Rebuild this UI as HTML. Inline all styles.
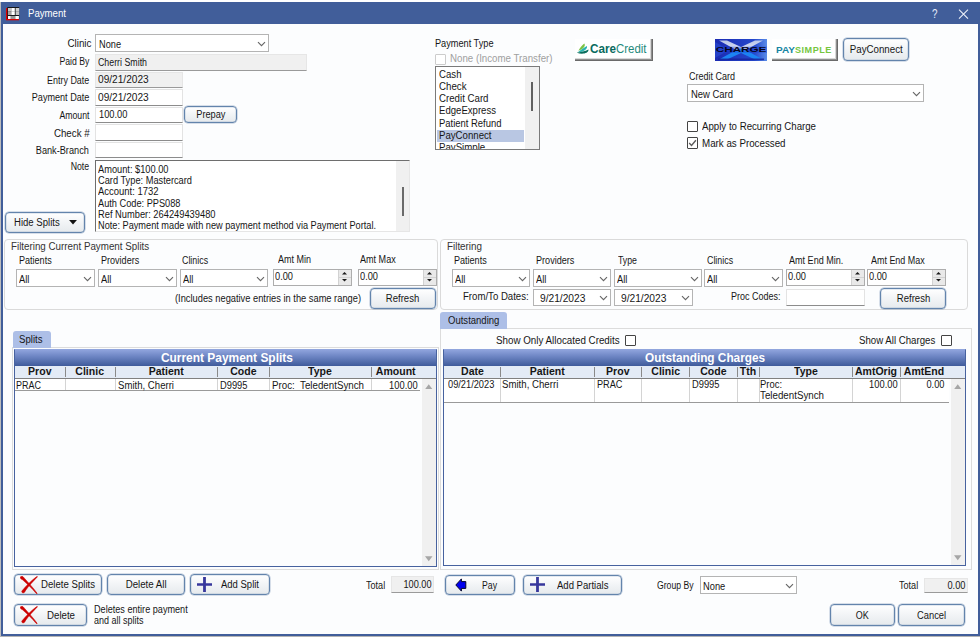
<!DOCTYPE html>
<html lang="en"><head><meta charset="utf-8"><title>Payment</title>
<style>
html,body{margin:0;padding:0;}
body{width:980px;height:637px;position:relative;overflow:hidden;background:#fff;font-family:"Liberation Sans",sans-serif;font-size:11px;}
body div, body span.t, body svg{position:absolute;box-sizing:border-box;}
span.t{white-space:pre;display:block;}
.win{background:#fcfdfe;}
.tb{background:#fff;border:1px solid #e3e3e3;border-bottom-color:#8c8c8c;}
.tbg{background:#f0f0f0;border:1px solid #e6e6e6;border-bottom-color:#9a9a9a;}
.cb{background:#fff;border:1px solid #b4b4b4;}
.btn{border:1px solid #6384ac;border-radius:4px;background:linear-gradient(#ffffff,#f3f5f7 45%,#e6eaed);box-shadow:0 0 0 0.5px rgba(99,132,172,.5),inset 0 0 0 0.5px rgba(99,132,172,.35);}
.chk{background:#fff;border:1px solid #444;border-radius:1px;}
.grp{border:1px solid #dadada;border-radius:4px;}

</style></head>
<body>
<div style="left:0px;top:0px;width:980px;height:637px;background:#fff;"></div>
<div style="left:0px;top:2px;width:1px;height:635px;background:#bdbdbd;"></div>
<div style="left:0px;top:636px;width:980px;height:1px;background:#b4b4b4;"></div>
<div style="left:1px;top:2px;width:979px;height:634px;background:#415e9a;"></div>
<div class="win" style="left:3px;top:24px;width:975px;height:610px;"></div>
<svg style="left:6px;top:7px" width="14" height="14" viewBox="0 0 14 14"><rect x="0" y="1" width="13" height="12.3" fill="#e00000"/><rect x="1.3" y="0" width="11.9" height="12" fill="#16181c"/><rect x="2" y="1" width="3.3" height="3.2" fill="#c6c6c6"/><rect x="5.3" y="1" width="3.5" height="3.2" fill="#fff"/><rect x="9.6" y="1" width="3.6" height="3.2" fill="#cfcfcf"/><rect x="2" y="4.2" width="3.3" height="3.8" fill="#a4a4a4"/><rect x="5.3" y="4.2" width="3.5" height="3.8" fill="#fff"/><rect x="9.6" y="4.2" width="3.6" height="3.8" fill="#c4c4c4"/><rect x="2" y="9" width="2.8" height="3" fill="#fff"/><rect x="4.8" y="9" width="4.5" height="3" fill="#979797"/><rect x="9.3" y="9" width="3.6" height="3" fill="#fff"/></svg>
<span class="t" style="left:28.3px;transform-origin:0 0;top:8.04px;font-size:10px;line-height:12px;transform:scaleX(0.9628);color:#fff;">Payment</span>
<span class="t" style="left:932px;transform-origin:0 0;top:7.34px;font-size:12px;line-height:14px;transform:scaleX(0.8224);color:#e8eefb;">?</span>
<svg style="left:958px;top:9px" width="11" height="11" viewBox="0 0 11 11"><path d="M1 0.7L10 9.7M10 0.7L1 9.7" stroke="#eef2fa" stroke-width="1.05" fill="none"/></svg>
<span class="t" style="left:66.55px;transform-origin:100% 0;top:38.03px;font-size:10px;line-height:12px;transform:scaleX(0.9815);color:#161616;">Clinic</span>
<div class="cb" style="left:95px;top:34px;width:174px;height:18px;"></div>
<svg style="left:256.7px;top:40.6px" width="9" height="6" viewBox="0 0 9 6"><path d="M1 1.2L4.5 4.6L8 1.2" stroke="#666" stroke-width="1.15" fill="none"/></svg>
<span class="t" style="left:99.4px;transform-origin:0 0;top:38.64px;font-size:10px;line-height:12px;transform:scaleX(0.9203);color:#161616;">None</span>
<span class="t" style="left:54.83px;transform-origin:100% 0;top:56.03px;font-size:10px;line-height:12px;transform:scaleX(0.8704);color:#161616;">Paid By</span>
<div class="tbg" style="left:95px;top:54px;width:212px;height:17px;"></div>
<span class="t" style="left:97.8px;transform-origin:0 0;top:56.53px;font-size:10px;line-height:12px;transform:scaleX(0.8816);color:#161616;">Cherri Smith</span>
<span class="t" style="left:42.05px;transform-origin:100% 0;top:74.53px;font-size:10px;line-height:12px;transform:scaleX(0.8931);color:#161616;">Entry Date</span>
<div class="tbg" style="left:95px;top:72px;width:88px;height:16px;"></div>
<span class="t" style="left:98px;transform-origin:0 0;top:73.53px;font-size:10px;line-height:12px;transform:scaleX(1.0127);color:#161616;">09/21/2023</span>
<span class="t" style="left:25.92px;transform-origin:100% 0;top:92.03px;font-size:10px;line-height:12px;transform:scaleX(0.9089);color:#161616;">Payment Date</span>
<div class="tb" style="left:95px;top:89px;width:88px;height:17px;"></div>
<span class="t" style="left:98px;transform-origin:0 0;top:91.53px;font-size:10px;line-height:12px;transform:scaleX(1.0127);color:#161616;">09/21/2023</span>
<span class="t" style="left:54.83px;transform-origin:100% 0;top:109.83px;font-size:10px;line-height:12px;transform:scaleX(0.8704);color:#161616;">Amount</span>
<div class="tb" style="left:95px;top:107px;width:88px;height:16px;"></div>
<span class="t" style="left:98.6px;transform-origin:0 0;top:108.53px;font-size:10px;line-height:12px;transform:scaleX(0.9283);color:#161616;">100.00</span>
<span class="t" style="left:52.81px;transform-origin:100% 0;top:127.53px;font-size:10px;line-height:12px;transform:scaleX(0.9758);color:#161616;">Check #</span>
<div class="tb" style="left:95px;top:124px;width:88px;height:17px;"></div>
<span class="t" style="left:31.49px;transform-origin:100% 0;top:145.03px;font-size:10px;line-height:12px;transform:scaleX(0.9168);color:#161616;">Bank-Branch</span>
<div class="tb" style="left:95px;top:142px;width:88px;height:16px;"></div>
<div class="btn" style="left:184px;top:106px;width:53px;height:17px;"></div>
<span class="t" style="left:194.56px;transform-origin:50% 0;top:109.03px;font-size:10px;line-height:12px;transform:scaleX(0.9215);color:#161616;">Prepay</span>
<span class="t" style="left:68.17px;transform-origin:100% 0;top:161.03px;font-size:10px;line-height:12px;transform:scaleX(0.8757);color:#161616;">Note</span>
<div style="left:95px;top:160px;width:315px;height:71.5px;background:#fff;border:1px solid #6e6e6e;border-right-color:#e6e6e6;border-bottom-color:#e6e6e6;"></div>
<div style="left:396px;top:161px;width:13px;height:70px;background:#f0f0f0;"></div>
<span class="t" style="left:98px;transform-origin:0 0;top:163.53px;font-size:10px;line-height:12px;transform:scaleX(0.9255);color:#161616;">Amount: $100.00</span>
<span class="t" style="left:98px;transform-origin:0 0;top:174.87px;font-size:10px;line-height:12px;transform:scaleX(0.9258);color:#161616;">Card Type: Mastercard</span>
<span class="t" style="left:98px;transform-origin:0 0;top:186.19px;font-size:10px;line-height:12px;transform:scaleX(0.9462);color:#161616;">Account: 1732</span>
<span class="t" style="left:98px;transform-origin:0 0;top:197.53px;font-size:10px;line-height:12px;transform:scaleX(0.9216);color:#161616;">Auth Code: PPS088</span>
<span class="t" style="left:98px;transform-origin:0 0;top:208.85px;font-size:10px;line-height:12px;transform:scaleX(0.9310);color:#161616;">Ref Number: 264249439480</span>
<span class="t" style="left:98px;transform-origin:0 0;top:220.19px;font-size:10px;line-height:12px;transform:scaleX(0.9194);color:#161616;">Note: Payment made with new payment method via Payment Portal.</span>
<div style="left:401.5px;top:187px;width:2px;height:29px;background:#6a6a6a;"></div>
<div class="btn" style="left:5px;top:212px;width:80px;height:21px;"></div>
<span class="t" style="left:13.8px;transform-origin:0 0;top:216.53px;font-size:10px;line-height:12px;transform:scaleX(0.9558);color:#161616;">Hide Splits</span>
<svg style="left:69.1px;top:220.4px" width="8" height="4.4" viewBox="0 0 9 5"><path d="M0 0H9L4.5 5Z" fill="#111"/></svg>
<span class="t" style="left:435px;transform-origin:0 0;top:37.53px;font-size:10px;line-height:12px;transform:scaleX(0.9176);color:#161616;">Payment Type</span>
<div class="chk" style="left:435px;top:54px;width:11px;height:11px;border-color:#ccc;"></div>
<span class="t" style="left:450px;transform-origin:0 0;top:52.53px;font-size:10px;line-height:12px;transform:scaleX(0.9706);color:#a0a0a0;">None (Income Transfer)</span>
<div style="left:435px;top:66px;width:105px;height:84px;background:#fff;border:1px solid #7a7a7a;overflow:hidden;"></div>
<div style="left:525px;top:67px;width:14px;height:82px;background:#f0f0f0;"></div>
<div style="left:531px;top:82px;width:2px;height:29px;background:#606060;"></div>
<div style="left:437px;top:130px;width:87px;height:12px;background:#b9c7e3;"></div>
<span class="t" style="left:438.7px;transform-origin:0 0;top:68.53px;font-size:10px;line-height:12px;transform:scaleX(0.9632);color:#161616;">Cash</span>
<span class="t" style="left:438.7px;transform-origin:0 0;top:80.78px;font-size:10px;line-height:12px;transform:scaleX(0.9697);color:#161616;">Check</span>
<span class="t" style="left:438.7px;transform-origin:0 0;top:93.03px;font-size:10px;line-height:12px;transform:scaleX(0.9679);color:#161616;">Credit Card</span>
<span class="t" style="left:438.7px;transform-origin:0 0;top:105.28px;font-size:10px;line-height:12px;transform:scaleX(0.9582);color:#161616;">EdgeExpress</span>
<span class="t" style="left:438.7px;transform-origin:0 0;top:117.53px;font-size:10px;line-height:12px;transform:scaleX(0.9445);color:#161616;">Patient Refund</span>
<span class="t" style="left:438.7px;transform-origin:0 0;top:129.78px;font-size:10px;line-height:12px;transform:scaleX(0.9636);color:#161616;">PayConnect</span>
<span class="t" style="left:438.7px;transform-origin:0 0;top:142.03px;font-size:10px;line-height:12px;transform:scaleX(0.9673);color:#161616;">PaySimple</span>
<div style="left:435px;top:149px;width:105px;height:1px;background:#7a7a7a;"></div>
<div style="left:435px;top:150px;width:106px;height:8px;background:#fcfdfe;"></div>
<div style="left:575px;top:39px;width:78px;height:22px;background:#fff;box-shadow:inset -1px -1px 0 #6a6a6a,inset -2px -2px 0 #8e8e8e,inset -3px -3px 0 #d8d8d8;"></div>
<svg style="left:577px;top:43px" width="12" height="11" viewBox="0 0 12 11"><path d="M1.4 7.8C2.8 5 5 2 7.3 0.5C8.9 2.6 6.6 6.2 1.4 7.8Z" fill="#7cc242"/><path d="M0.8 9.2C4 7 7.2 4.2 9.9 2.9C11 6 6 9.4 0.8 9.2Z" fill="#2ab5b0"/><path d="M-0.3 9.5C3 9 8 8.4 11.5 6.4C11.9 10.2 5 12 -0.3 9.5Z" fill="#0a6e5e"/></svg>
<span class="t" style="left:590px;transform-origin:0 0;top:41.30px;font-size:13px;line-height:15px;transform:scaleX(0.8990);color:#0a6b5e;font-weight:bold;">Care</span>
<span class="t" style="left:616.3px;transform-origin:0 0;top:41.30px;font-size:13px;line-height:15px;transform:scaleX(0.8793);color:#1f8a7c;">Credit</span>
<div style="left:715px;top:39px;width:52px;height:22px;overflow:hidden;"><svg style="left:0;top:0" width="52" height="22" viewBox="0 0 52 22"><defs><linearGradient id="xg" x1="0" x2="1" y1="0" y2="0"><stop offset="0" stop-color="#1b2bb2"/><stop offset=".75" stop-color="#2447cc"/><stop offset="1" stop-color="#5a8ce8"/></linearGradient><linearGradient id="xs" x1="0" x2="0" y1="0" y2="1"><stop offset="0" stop-color="#c9d3ea"/><stop offset="1" stop-color="#f4f7ff"/></linearGradient></defs><rect width="52" height="22" fill="url(#xg)"/><path d="M0 3L0 19L14 11Z" fill="#2a4ad0" opacity=".7"/><path d="M4 1.5L12 1.5L26 8L40 1.5L48 1.5L28 12.5L24 12.5Z" fill="url(#xs)" opacity=".9"/><path d="M24 9.5L28 9.5L48 20.5L40 20.5L26 14L12 20.5L4 20.5Z" fill="#1c84f2"/><rect x="0" y="7.6" width="52" height="6.4" fill="#1a3fd0" opacity=".35"/><rect x="3" y="19.5" width="46" height="1.6" fill="#16209a" opacity=".8"/><text x="0.8" y="13.1" font-family="Liberation Sans, sans-serif" font-weight="bold" font-size="7.2" textLength="50.6" lengthAdjust="spacingAndGlyphs" fill="#05051c">CHARGE</text></svg></div>
<div style="left:772px;top:39px;width:66px;height:22px;background:#fff;box-shadow:inset -1px -1px 0 #6a6a6a,inset -2px -2px 0 #8e8e8e,inset -3px -3px 0 #d8d8d8;"></div>
<span class="t" style="left:776.3px;transform-origin:0 0;top:44.55px;font-size:8.8px;line-height:10.8px;transform:scaleX(1.1358);color:#1585a2;font-weight:bold;">PAY</span>
<span class="t" style="left:794.9px;transform-origin:0 0;top:44.55px;font-size:8.8px;line-height:10.8px;transform:scaleX(1.0322);color:#76c63f;font-weight:bold;letter-spacing:0.5px;">SIMPLE</span>
<div class="btn" style="left:843px;top:38px;width:66px;height:23px;"></div>
<span class="t" style="left:849.26px;transform-origin:50% 0;top:43.53px;font-size:10px;line-height:12px;transform:scaleX(0.9728);color:#161616;">PayConnect</span>
<span class="t" style="left:689px;transform-origin:0 0;top:70.53px;font-size:10px;line-height:12px;transform:scaleX(0.8995);color:#161616;">Credit Card</span>
<div class="cb" style="left:687px;top:84px;width:237px;height:18px;"></div>
<svg style="left:911.7px;top:90.6px" width="9" height="6" viewBox="0 0 9 6"><path d="M1 1.2L4.5 4.6L8 1.2" stroke="#666" stroke-width="1.15" fill="none"/></svg>
<span class="t" style="left:691px;transform-origin:0 0;top:88.63px;font-size:10px;line-height:12px;transform:scaleX(0.9445);color:#161616;">New Card</span>
<div class="chk" style="left:687px;top:121px;width:11px;height:11px;"></div>
<span class="t" style="left:702px;transform-origin:0 0;top:120.53px;font-size:10px;line-height:12px;transform:scaleX(0.9674);color:#161616;">Apply to Recurring Charge</span>
<div class="chk" style="left:687px;top:137px;width:11px;height:12px;"></div>
<svg style="left:687px;top:137px" width="11" height="12" viewBox="0 0 11 11"><path d="M2.2 5.6L4.5 7.9L8.9 2.7" stroke="#5c5c5c" stroke-width="1.4" fill="none"/></svg>
<span class="t" style="left:702px;transform-origin:0 0;top:137.53px;font-size:10px;line-height:12px;transform:scaleX(0.9755);color:#161616;">Mark as Processed</span>
<div class="grp" style="left:4px;top:239px;width:434px;height:71px;"></div>
<span class="t" style="left:10.8px;transform-origin:0 0;top:241.34px;font-size:10px;line-height:12px;transform:scaleX(0.9789);color:#333;">Filtering Current Payment Splits</span>
<span class="t" style="left:18.8px;transform-origin:0 0;top:255.03px;font-size:10px;line-height:12px;transform:scaleX(0.9048);color:#161616;">Patients</span>
<span class="t" style="left:100.5px;transform-origin:0 0;top:255.03px;font-size:10px;line-height:12px;transform:scaleX(0.9041);color:#161616;">Providers</span>
<span class="t" style="left:181.9px;transform-origin:0 0;top:255.03px;font-size:10px;line-height:12px;transform:scaleX(0.8862);color:#161616;">Clinics</span>
<span class="t" style="left:278px;transform-origin:0 0;top:253.53px;font-size:10px;line-height:12px;transform:scaleX(0.8999);color:#161616;">Amt Min</span>
<span class="t" style="left:360px;transform-origin:0 0;top:253.53px;font-size:10px;line-height:12px;transform:scaleX(0.9049);color:#161616;">Amt Max</span>
<div class="cb" style="left:16px;top:269px;width:79px;height:18px;"></div>
<svg style="left:82.7px;top:275.6px" width="9" height="6" viewBox="0 0 9 6"><path d="M1 1.2L4.5 4.6L8 1.2" stroke="#666" stroke-width="1.15" fill="none"/></svg>
<span class="t" style="left:19.1px;transform-origin:0 0;top:273.64px;font-size:10px;line-height:12px;transform:scaleX(0.9348);color:#161616;">All</span>
<div class="cb" style="left:98px;top:269px;width:79px;height:18px;"></div>
<svg style="left:164.7px;top:275.6px" width="9" height="6" viewBox="0 0 9 6"><path d="M1 1.2L4.5 4.6L8 1.2" stroke="#666" stroke-width="1.15" fill="none"/></svg>
<span class="t" style="left:101.1px;transform-origin:0 0;top:273.64px;font-size:10px;line-height:12px;transform:scaleX(0.9348);color:#161616;">All</span>
<div class="cb" style="left:180px;top:269px;width:88px;height:18px;"></div>
<svg style="left:255.7px;top:275.6px" width="9" height="6" viewBox="0 0 9 6"><path d="M1 1.2L4.5 4.6L8 1.2" stroke="#666" stroke-width="1.15" fill="none"/></svg>
<span class="t" style="left:183.1px;transform-origin:0 0;top:273.64px;font-size:10px;line-height:12px;transform:scaleX(0.9348);color:#161616;">All</span>
<div style="left:273px;top:269px;width:79px;height:17px;background:#fff;border:1px solid #adadad;"></div>
<span class="t" style="left:275px;transform-origin:0 0;top:270.54px;font-size:10px;line-height:12px;transform:scaleX(0.9246);color:#161616;">0.00</span>
<div style="left:338px;top:270px;width:13px;height:15px;background:#e9e9e9;border-left:1px solid #d2d2d2;"></div>
<div style="left:338px;top:277.0px;width:13px;height:1px;background:#d2d2d2;"></div>
<svg style="left:342px;top:272.4px" width="5" height="2.5" viewBox="0 0 6 3"><path d="M0 3H6L3 0Z" fill="#1a1a1a"/></svg>
<svg style="left:342px;top:279px" width="5" height="2.5" viewBox="0 0 6 3"><path d="M0 0H6L3 3Z" fill="#1a1a1a"/></svg>
<div style="left:358px;top:269px;width:79px;height:17px;background:#fff;border:1px solid #adadad;"></div>
<span class="t" style="left:360px;transform-origin:0 0;top:270.54px;font-size:10px;line-height:12px;transform:scaleX(0.9246);color:#161616;">0.00</span>
<div style="left:423px;top:270px;width:13px;height:15px;background:#e9e9e9;border-left:1px solid #d2d2d2;"></div>
<div style="left:423px;top:277.0px;width:13px;height:1px;background:#d2d2d2;"></div>
<svg style="left:427px;top:272.4px" width="5" height="2.5" viewBox="0 0 6 3"><path d="M0 3H6L3 0Z" fill="#1a1a1a"/></svg>
<svg style="left:427px;top:279px" width="5" height="2.5" viewBox="0 0 6 3"><path d="M0 0H6L3 3Z" fill="#1a1a1a"/></svg>
<span class="t" style="left:175px;transform-origin:0 0;top:292.54px;font-size:10px;line-height:12px;transform:scaleX(0.9294);color:#161616;">(Includes negative entries in the same range)</span>
<div class="btn" style="left:370px;top:288px;width:66px;height:21px;"></div>
<span class="t" style="left:385.49px;transform-origin:50% 0;top:292.54px;font-size:10px;line-height:12px;transform:scaleX(0.9539);color:#161616;">Refresh</span>
<div class="grp" style="left:440px;top:239px;width:528px;height:71px;"></div>
<span class="t" style="left:447px;transform-origin:0 0;top:241.03px;font-size:10px;line-height:12px;transform:scaleX(0.9838);color:#333;">Filtering</span>
<span class="t" style="left:454.4px;transform-origin:0 0;top:255.03px;font-size:10px;line-height:12px;transform:scaleX(0.9048);color:#161616;">Patients</span>
<span class="t" style="left:535.6px;transform-origin:0 0;top:255.03px;font-size:10px;line-height:12px;transform:scaleX(0.9089);color:#161616;">Providers</span>
<span class="t" style="left:617.9px;transform-origin:0 0;top:255.03px;font-size:10px;line-height:12px;transform:scaleX(0.8761);color:#161616;">Type</span>
<span class="t" style="left:707px;transform-origin:0 0;top:255.03px;font-size:10px;line-height:12px;transform:scaleX(0.8862);color:#161616;">Clinics</span>
<span class="t" style="left:788.6px;transform-origin:0 0;top:255.03px;font-size:10px;line-height:12px;transform:scaleX(0.9045);color:#161616;">Amt End Min.</span>
<span class="t" style="left:870.6px;transform-origin:0 0;top:255.03px;font-size:10px;line-height:12px;transform:scaleX(0.8945);color:#161616;">Amt End Max</span>
<div class="cb" style="left:452px;top:269px;width:78px;height:18px;"></div>
<svg style="left:517.7px;top:275.6px" width="9" height="6" viewBox="0 0 9 6"><path d="M1 1.2L4.5 4.6L8 1.2" stroke="#666" stroke-width="1.15" fill="none"/></svg>
<span class="t" style="left:455.1px;transform-origin:0 0;top:273.64px;font-size:10px;line-height:12px;transform:scaleX(0.9348);color:#161616;">All</span>
<div class="cb" style="left:533px;top:269px;width:78px;height:18px;"></div>
<svg style="left:598.7px;top:275.6px" width="9" height="6" viewBox="0 0 9 6"><path d="M1 1.2L4.5 4.6L8 1.2" stroke="#666" stroke-width="1.15" fill="none"/></svg>
<span class="t" style="left:536.1px;transform-origin:0 0;top:273.64px;font-size:10px;line-height:12px;transform:scaleX(0.9348);color:#161616;">All</span>
<div class="cb" style="left:614px;top:269px;width:88px;height:18px;"></div>
<svg style="left:689.7px;top:275.6px" width="9" height="6" viewBox="0 0 9 6"><path d="M1 1.2L4.5 4.6L8 1.2" stroke="#666" stroke-width="1.15" fill="none"/></svg>
<span class="t" style="left:617.1px;transform-origin:0 0;top:273.64px;font-size:10px;line-height:12px;transform:scaleX(0.9348);color:#161616;">All</span>
<div class="cb" style="left:704px;top:269px;width:79px;height:18px;"></div>
<svg style="left:770.7px;top:275.6px" width="9" height="6" viewBox="0 0 9 6"><path d="M1 1.2L4.5 4.6L8 1.2" stroke="#666" stroke-width="1.15" fill="none"/></svg>
<span class="t" style="left:707.1px;transform-origin:0 0;top:273.64px;font-size:10px;line-height:12px;transform:scaleX(0.9348);color:#161616;">All</span>
<div style="left:786px;top:269px;width:79px;height:17px;background:#fff;border:1px solid #adadad;"></div>
<span class="t" style="left:788px;transform-origin:0 0;top:270.54px;font-size:10px;line-height:12px;transform:scaleX(0.9246);color:#161616;">0.00</span>
<div style="left:851px;top:270px;width:13px;height:15px;background:#e9e9e9;border-left:1px solid #d2d2d2;"></div>
<div style="left:851px;top:277.0px;width:13px;height:1px;background:#d2d2d2;"></div>
<svg style="left:855px;top:272.4px" width="5" height="2.5" viewBox="0 0 6 3"><path d="M0 3H6L3 0Z" fill="#1a1a1a"/></svg>
<svg style="left:855px;top:279px" width="5" height="2.5" viewBox="0 0 6 3"><path d="M0 0H6L3 3Z" fill="#1a1a1a"/></svg>
<div style="left:867px;top:269px;width:79px;height:17px;background:#fff;border:1px solid #adadad;"></div>
<span class="t" style="left:869px;transform-origin:0 0;top:270.54px;font-size:10px;line-height:12px;transform:scaleX(0.9246);color:#161616;">0.00</span>
<div style="left:932px;top:270px;width:13px;height:15px;background:#e9e9e9;border-left:1px solid #d2d2d2;"></div>
<div style="left:932px;top:277.0px;width:13px;height:1px;background:#d2d2d2;"></div>
<svg style="left:936px;top:272.4px" width="5" height="2.5" viewBox="0 0 6 3"><path d="M0 3H6L3 0Z" fill="#1a1a1a"/></svg>
<svg style="left:936px;top:279px" width="5" height="2.5" viewBox="0 0 6 3"><path d="M0 0H6L3 3Z" fill="#1a1a1a"/></svg>
<span class="t" style="left:463px;transform-origin:0 0;top:290.54px;font-size:10px;line-height:12px;transform:scaleX(0.9611);color:#161616;">From/To Dates:</span>
<div class="cb" style="left:533px;top:289px;width:78px;height:17px;"></div>
<svg style="left:598.7px;top:295.1px" width="9" height="6" viewBox="0 0 9 6"><path d="M1 1.2L4.5 4.6L8 1.2" stroke="#666" stroke-width="1.15" fill="none"/></svg>
<span class="t" style="left:540.1px;transform-origin:0 0;top:293.14px;font-size:10px;line-height:12px;transform:scaleX(1.0202);color:#161616;">9/21/2023</span>
<div class="cb" style="left:614px;top:289px;width:79px;height:17px;"></div>
<svg style="left:680.7px;top:295.1px" width="9" height="6" viewBox="0 0 9 6"><path d="M1 1.2L4.5 4.6L8 1.2" stroke="#666" stroke-width="1.15" fill="none"/></svg>
<span class="t" style="left:621.3px;transform-origin:0 0;top:293.14px;font-size:10px;line-height:12px;transform:scaleX(1.0202);color:#161616;">9/21/2023</span>
<span class="t" style="left:731.4px;transform-origin:0 0;top:290.54px;font-size:10px;line-height:12px;transform:scaleX(0.8995);color:#161616;">Proc Codes:</span>
<div class="tb" style="left:786px;top:289px;width:79px;height:17px;"></div>
<div class="btn" style="left:880px;top:288px;width:66px;height:21px;"></div>
<span class="t" style="left:895.79px;transform-origin:50% 0;top:292.54px;font-size:10px;line-height:12px;transform:scaleX(0.9539);color:#161616;">Refresh</span>
<div style="left:12px;top:347px;width:426.5px;height:223px;border:1px solid #dcdcdc;"></div>
<div style="left:12.5px;top:331px;width:38px;height:16.5px;background:#adbfe7;border-radius:3px 3px 0 0;"></div>
<span class="t" style="left:18.9px;transform-origin:0 0;top:333.54px;font-size:10px;line-height:12px;transform:scaleX(0.9610);color:#161616;">Splits</span>
<div style="left:14px;top:349px;width:423px;height:218px;background:#fcfdfe;border:1px solid #47629f;border-top-color:#8ea2da;"></div>
<div style="left:15px;top:349px;width:421px;height:17px;background:linear-gradient(#93a7df,#7088c6 40%,#3f5b9b);"></div>
<span class="t" style="left:154.62px;transform-origin:50% 0;top:350.20px;font-size:13px;line-height:15px;transform:scaleX(0.9182);color:#fff;font-weight:bold;">Current Payment Splits</span>
<div style="left:15px;top:366px;width:421px;height:13px;background:#e3ebf6;border-bottom:1px solid #808080;"></div>
<div style="left:421.5px;top:379px;width:14.5px;height:187px;background:#f0f0f0;"></div>
<span class="t" style="left:27.21px;transform-origin:50% 0;top:365.27px;font-size:11.5px;line-height:13.5px;transform:scaleX(0.9150);color:#161616;font-weight:bold;">Prov</span>
<span class="t" style="left:74.34px;transform-origin:50% 0;top:365.27px;font-size:11.5px;line-height:13.5px;transform:scaleX(0.9150);color:#161616;font-weight:bold;">Clinic</span>
<span class="t" style="left:146.83px;transform-origin:50% 0;top:365.27px;font-size:11.5px;line-height:13.5px;transform:scaleX(0.9150);color:#161616;font-weight:bold;">Patient</span>
<span class="t" style="left:228.62px;transform-origin:50% 0;top:365.27px;font-size:11.5px;line-height:13.5px;transform:scaleX(0.9150);color:#161616;font-weight:bold;">Code</span>
<span class="t" style="left:307.00px;transform-origin:50% 0;top:365.27px;font-size:11.5px;line-height:13.5px;transform:scaleX(0.9150);color:#161616;font-weight:bold;">Type</span>
<span class="t" style="left:373.78px;transform-origin:50% 0;top:365.27px;font-size:11.5px;line-height:13.5px;transform:scaleX(0.9150);color:#161616;font-weight:bold;">Amount</span>
<div style="left:65px;top:367.3px;width:1px;height:9.4px;background:#8a8a8a;"></div>
<div style="left:115px;top:367.3px;width:1px;height:9.4px;background:#8a8a8a;"></div>
<div style="left:217px;top:367.3px;width:1px;height:9.4px;background:#8a8a8a;"></div>
<div style="left:269px;top:367.3px;width:1px;height:9.4px;background:#8a8a8a;"></div>
<div style="left:371px;top:367.3px;width:1px;height:9.4px;background:#8a8a8a;"></div>
<div style="left:15px;top:379px;width:405px;height:12px;background:#fff;border-bottom:1px solid #9a9a9a;"></div>
<div style="left:65px;top:379px;width:1px;height:11px;background:#d4d4d4;"></div>
<div style="left:115px;top:379px;width:1px;height:11px;background:#d4d4d4;"></div>
<div style="left:217px;top:379px;width:1px;height:11px;background:#d4d4d4;"></div>
<div style="left:269px;top:379px;width:1px;height:11px;background:#d4d4d4;"></div>
<div style="left:371px;top:379px;width:1px;height:11px;background:#d4d4d4;"></div>
<svg style="left:425px;top:383.7px" width="7.5" height="5.5" viewBox="0 0 9 6"><path d="M0 6H9L4.5 0Z" fill="#a6a6a6"/></svg>
<svg style="left:425px;top:556px" width="7.5" height="5.5" viewBox="0 0 9 6"><path d="M0 0H9L4.5 6Z" fill="#a6a6a6"/></svg>
<span class="t" style="left:16px;transform-origin:0 0;top:379.54px;font-size:10px;line-height:12px;transform:scaleX(0.8994);color:#161616;">PRAC</span>
<span class="t" style="left:117.5px;transform-origin:0 0;top:379.54px;font-size:10px;line-height:12px;transform:scaleX(0.9596);color:#161616;">Smith, Cherri</span>
<span class="t" style="left:220px;transform-origin:0 0;top:379.54px;font-size:10px;line-height:12px;transform:scaleX(0.9332);color:#161616;">D9995</span>
<span class="t" style="left:272px;transform-origin:0 0;top:379.54px;font-size:10px;line-height:12px;transform:scaleX(0.9753);color:#161616;">Proc:  TeledentSynch</span>
<span class="t" style="left:386.91px;transform-origin:100% 0;top:379.54px;font-size:10px;line-height:12px;transform:scaleX(0.9316);color:#161616;">100.00</span>
<div style="left:440px;top:328px;width:532px;height:242px;border:1px solid #dcdcdc;"></div>
<div style="left:440px;top:312px;width:67px;height:17px;background:#adbfe7;border-radius:3px 3px 0 0;"></div>
<span class="t" style="left:448px;transform-origin:0 0;top:314.54px;font-size:10px;line-height:12px;transform:scaleX(0.9530);color:#161616;">Outstanding</span>
<span class="t" style="left:496.4px;transform-origin:0 0;top:335.04px;font-size:10px;line-height:12px;transform:scaleX(0.9796);color:#161616;">Show Only Allocated Credits</span>
<div class="chk" style="left:625px;top:335px;width:11px;height:11px;"></div>
<span class="t" style="left:859.4px;transform-origin:0 0;top:335.04px;font-size:10px;line-height:12px;transform:scaleX(0.9666);color:#161616;">Show All Charges</span>
<div class="chk" style="left:941px;top:335px;width:11px;height:11px;"></div>
<div style="left:443px;top:349px;width:523px;height:217px;background:#fcfdfe;border:1px solid #47629f;border-top-color:#8ea2da;"></div>
<div style="left:444px;top:349px;width:521px;height:17px;background:linear-gradient(#93a7df,#7088c6 40%,#3f5b9b);"></div>
<span class="t" style="left:639.41px;transform-origin:50% 0;top:350.20px;font-size:13px;line-height:15px;transform:scaleX(0.9078);color:#fff;font-weight:bold;">Outstanding Charges</span>
<div style="left:444px;top:366px;width:521px;height:13px;background:#e3ebf6;border-bottom:1px solid #808080;"></div>
<div style="left:950.5px;top:379px;width:14.5px;height:186px;background:#f0f0f0;"></div>
<span class="t" style="left:459.53px;transform-origin:50% 0;top:365.27px;font-size:11.5px;line-height:13.5px;transform:scaleX(0.9150);color:#161616;font-weight:bold;">Date</span>
<span class="t" style="left:528.03px;transform-origin:50% 0;top:365.27px;font-size:11.5px;line-height:13.5px;transform:scaleX(0.9150);color:#161616;font-weight:bold;">Patient</span>
<span class="t" style="left:605.11px;transform-origin:50% 0;top:365.27px;font-size:11.5px;line-height:13.5px;transform:scaleX(0.9150);color:#161616;font-weight:bold;">Prov</span>
<span class="t" style="left:649.74px;transform-origin:50% 0;top:365.27px;font-size:11.5px;line-height:13.5px;transform:scaleX(0.9150);color:#161616;font-weight:bold;">Clinic</span>
<span class="t" style="left:698.67px;transform-origin:50% 0;top:365.27px;font-size:11.5px;line-height:13.5px;transform:scaleX(0.9150);color:#161616;font-weight:bold;">Code</span>
<span class="t" style="left:738.75px;transform-origin:50% 0;top:365.27px;font-size:11.5px;line-height:13.5px;transform:scaleX(0.9150);color:#161616;font-weight:bold;">Tth</span>
<span class="t" style="left:792.55px;transform-origin:50% 0;top:365.27px;font-size:11.5px;line-height:13.5px;transform:scaleX(0.9150);color:#161616;font-weight:bold;">Type</span>
<span class="t" style="left:853.25px;transform-origin:50% 0;top:365.27px;font-size:11.5px;line-height:13.5px;transform:scaleX(0.9150);color:#161616;font-weight:bold;">AmtOrig</span>
<span class="t" style="left:901.90px;transform-origin:50% 0;top:365.27px;font-size:11.5px;line-height:13.5px;transform:scaleX(0.9150);color:#161616;font-weight:bold;">AmtEnd</span>
<div style="left:500px;top:367.3px;width:1px;height:9.4px;background:#8a8a8a;"></div>
<div style="left:594.4px;top:367.3px;width:1px;height:9.4px;background:#8a8a8a;"></div>
<div style="left:641.4px;top:367.3px;width:1px;height:9.4px;background:#8a8a8a;"></div>
<div style="left:689.4px;top:367.3px;width:1px;height:9.4px;background:#8a8a8a;"></div>
<div style="left:736.6999999999999px;top:367.3px;width:1px;height:9.4px;background:#8a8a8a;"></div>
<div style="left:758.6999999999999px;top:367.3px;width:1px;height:9.4px;background:#8a8a8a;"></div>
<div style="left:852.4px;top:367.3px;width:1px;height:9.4px;background:#8a8a8a;"></div>
<div style="left:900.1px;top:367.3px;width:1px;height:9.4px;background:#8a8a8a;"></div>
<div style="left:444px;top:379px;width:505px;height:24px;background:#fff;border-bottom:1px solid #9a9a9a;"></div>
<div style="left:500px;top:379px;width:1px;height:23px;background:#d4d4d4;"></div>
<div style="left:594.4px;top:379px;width:1px;height:23px;background:#d4d4d4;"></div>
<div style="left:641.4px;top:379px;width:1px;height:23px;background:#d4d4d4;"></div>
<div style="left:689.4px;top:379px;width:1px;height:23px;background:#d4d4d4;"></div>
<div style="left:736.6999999999999px;top:379px;width:1px;height:23px;background:#d4d4d4;"></div>
<div style="left:758.6999999999999px;top:379px;width:1px;height:23px;background:#d4d4d4;"></div>
<div style="left:852.4px;top:379px;width:1px;height:23px;background:#d4d4d4;"></div>
<div style="left:900.1px;top:379px;width:1px;height:23px;background:#d4d4d4;"></div>
<svg style="left:954px;top:383.7px" width="7.5" height="5.5" viewBox="0 0 9 6"><path d="M0 6H9L4.5 0Z" fill="#a6a6a6"/></svg>
<svg style="left:954px;top:555px" width="7.5" height="5.5" viewBox="0 0 9 6"><path d="M0 0H9L4.5 6Z" fill="#a6a6a6"/></svg>
<span class="t" style="left:447.9px;transform-origin:0 0;top:378.54px;font-size:10px;line-height:12px;transform:scaleX(0.9248);color:#161616;">09/21/2023</span>
<span class="t" style="left:501.6px;transform-origin:0 0;top:378.54px;font-size:10px;line-height:12px;transform:scaleX(0.9647);color:#161616;">Smith, Cherri</span>
<span class="t" style="left:596.5px;transform-origin:0 0;top:378.54px;font-size:10px;line-height:12px;transform:scaleX(0.9174);color:#161616;">PRAC</span>
<span class="t" style="left:691.5px;transform-origin:0 0;top:378.54px;font-size:10px;line-height:12px;transform:scaleX(0.9332);color:#161616;">D9995</span>
<span class="t" style="left:760px;transform-origin:0 0;top:378.54px;font-size:10px;line-height:12px;transform:scaleX(0.9424);color:#161616;">Proc:</span>
<span class="t" style="left:760px;transform-origin:0 0;top:389.74px;font-size:10px;line-height:12px;transform:scaleX(0.9755);color:#161616;">TeledentSynch</span>
<span class="t" style="left:866.71px;transform-origin:100% 0;top:378.54px;font-size:10px;line-height:12px;transform:scaleX(0.9316);color:#161616;">100.00</span>
<span class="t" style="left:925.03px;transform-origin:100% 0;top:378.54px;font-size:10px;line-height:12px;transform:scaleX(0.9246);color:#161616;">0.00</span>
<div class="btn" style="left:14px;top:574px;width:88px;height:21px;"></div>
<svg style="left:20px;top:575.7px" width="18" height="18" viewBox="0 0 18 18"><path d="M0.4 0.9C1.4 -0.3 3 0.2 4.1 1.9C8 6.4 13 11.4 17.1 17.3C17.3 17.8 16.6 17.9 16.1 17.3C12 12.2 7 7.8 2.6 3.8C1 3.1 -0.1 2.1 0.4 0.9Z" fill="#cc0000" stroke="#cc0000" stroke-width="0.6"/><path d="M17.5 0.7C17.1 0.3 16.5 0.7 15.9 1.2C11 5 6 10 1.9 15C1.4 16.1 2.5 17.3 3.8 16.8C4.8 16.3 5.1 15 5.9 13.9C9 9.4 13.6 4.9 17.5 0.7Z" fill="#cc0000" stroke="#cc0000" stroke-width="0.6"/></svg>
<span class="t" style="left:41px;transform-origin:0 0;top:579.03px;font-size:10px;line-height:12px;transform:scaleX(0.9619);color:#161616;">Delete Splits</span>
<div class="btn" style="left:107px;top:574px;width:78px;height:21px;"></div>
<span class="t" style="left:124.88px;transform-origin:50% 0;top:579.03px;font-size:10px;line-height:12px;transform:scaleX(0.9704);color:#161616;">Delete All</span>
<div class="btn" style="left:190px;top:574px;width:80px;height:21px;"></div>
<svg style="left:196.9px;top:576.6px" width="15.2" height="15.2" viewBox="0 0 15.2 15.2"><path d="M6.1 0H8.9V6.2H15.2V8.8H8.9V15.2H6.1V8.8H0V6.2H6.1Z" fill="#37379c"/></svg>
<span class="t" style="left:220.6px;transform-origin:0 0;top:579.03px;font-size:10px;line-height:12px;transform:scaleX(0.9493);color:#161616;">Add Split</span>
<span class="t" style="left:365.7px;transform-origin:0 0;top:579.83px;font-size:10px;line-height:12px;transform:scaleX(0.9089);color:#161616;">Total</span>
<div class="tbg" style="left:391px;top:576px;width:43px;height:17px;"></div>
<span class="t" style="left:401.21px;transform-origin:100% 0;top:578.53px;font-size:10px;line-height:12px;transform:scaleX(0.9185);color:#161616;">100.00</span>
<div class="btn" style="left:14px;top:604px;width:73px;height:22px;"></div>
<svg style="left:20px;top:606.2px" width="18" height="18" viewBox="0 0 18 18"><path d="M0.4 0.9C1.4 -0.3 3 0.2 4.1 1.9C8 6.4 13 11.4 17.1 17.3C17.3 17.8 16.6 17.9 16.1 17.3C12 12.2 7 7.8 2.6 3.8C1 3.1 -0.1 2.1 0.4 0.9Z" fill="#cc0000" stroke="#cc0000" stroke-width="0.6"/><path d="M17.5 0.7C17.1 0.3 16.5 0.7 15.9 1.2C11 5 6 10 1.9 15C1.4 16.1 2.5 17.3 3.8 16.8C4.8 16.3 5.1 15 5.9 13.9C9 9.4 13.6 4.9 17.5 0.7Z" fill="#cc0000" stroke="#cc0000" stroke-width="0.6"/></svg>
<span class="t" style="left:47px;transform-origin:0 0;top:609.53px;font-size:10px;line-height:12px;transform:scaleX(0.9686);color:#161616;">Delete</span>
<span class="t" style="left:94.3px;transform-origin:0 0;top:603.53px;font-size:10px;line-height:12px;transform:scaleX(0.9111);color:#161616;">Deletes entire payment</span>
<span class="t" style="left:94.3px;transform-origin:0 0;top:614.83px;font-size:10px;line-height:12px;transform:scaleX(0.8977);color:#161616;">and all splits</span>
<div class="btn" style="left:445px;top:575px;width:70px;height:20px;"></div>
<svg style="left:455px;top:577.7px" width="12" height="14" viewBox="0 0 12 14"><path d="M0.8 7L6.4 0.9V3.6H10.8V10.4H6.4V13.1Z" fill="#0000ee" stroke="#06062a" stroke-width="1" stroke-linejoin="round"/></svg>
<span class="t" style="left:482px;transform-origin:0 0;top:579.74px;font-size:10px;line-height:12px;transform:scaleX(0.8704);color:#161616;">Pay</span>
<div class="btn" style="left:523px;top:575px;width:99px;height:20px;"></div>
<svg style="left:530.3px;top:576.6px" width="15.2" height="15.2" viewBox="0 0 15.2 15.2"><path d="M6.1 0H8.9V6.2H15.2V8.8H8.9V15.2H6.1V8.8H0V6.2H6.1Z" fill="#37379c"/></svg>
<span class="t" style="left:556.6px;transform-origin:0 0;top:579.74px;font-size:10px;line-height:12px;transform:scaleX(0.9532);color:#161616;">Add Partials</span>
<span class="t" style="left:657.4px;transform-origin:0 0;top:579.83px;font-size:10px;line-height:12px;transform:scaleX(0.8663);color:#161616;">Group By</span>
<div class="cb" style="left:700px;top:576px;width:97px;height:18px;"></div>
<svg style="left:784.7px;top:582.6px" width="9" height="6" viewBox="0 0 9 6"><path d="M1 1.2L4.5 4.6L8 1.2" stroke="#666" stroke-width="1.15" fill="none"/></svg>
<span class="t" style="left:703.1px;transform-origin:0 0;top:580.63px;font-size:10px;line-height:12px;transform:scaleX(0.9300);color:#161616;">None</span>
<span class="t" style="left:899px;transform-origin:0 0;top:579.83px;font-size:10px;line-height:12px;transform:scaleX(0.9089);color:#161616;">Total</span>
<div class="tbg" style="left:924px;top:578px;width:44px;height:15px;"></div>
<span class="t" style="left:945.53px;transform-origin:100% 0;top:579.53px;font-size:10px;line-height:12px;transform:scaleX(0.9246);color:#161616;">0.00</span>
<div class="btn" style="left:830px;top:604px;width:65px;height:22px;"></div>
<span class="t" style="left:855.27px;transform-origin:50% 0;top:609.74px;font-size:10px;line-height:12px;transform:scaleX(0.8995);color:#161616;">OK</span>
<div class="btn" style="left:898px;top:604px;width:67px;height:22px;"></div>
<span class="t" style="left:915.73px;transform-origin:50% 0;top:609.74px;font-size:10px;line-height:12px;transform:scaleX(0.9313);color:#161616;">Cancel</span>
</body></html>
